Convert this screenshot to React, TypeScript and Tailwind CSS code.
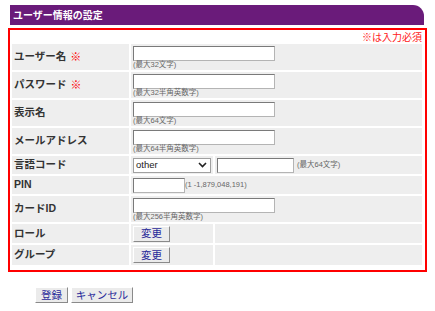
import React from 'react';

const font = { fontFamily: '"Liberation Sans", "Noto Sans CJK JP", sans-serif' };

const TextBox: React.FC<{ w: string }> = ({ w }) => (
  <div
    className={`${w} h-[15px] bg-white border border-[#b4b4b4] border-t-[#7a7a7a] border-l-[#7a7a7a]`}
  />
);

const Note: React.FC<{ children: React.ReactNode }> = ({ children }) => (
  <span className="text-[7.5px] leading-[8px] text-[#666]">{children}</span>
);

const Btn: React.FC<{ label: string; w: string }> = ({ label, w }) => (
  <button
    type="button"
    className={`${w} h-[16px] flex items-center justify-center bg-[#ebebeb] border border-white border-r-[#8a8a8a] border-b-[#8a8a8a] text-[10.5px] leading-none text-[#2a2a9a]`}
  >
    {label}
  </button>
);

const Label: React.FC<{ text: string; req?: boolean }> = ({ text, req }) => (
  <div className="bg-[#eeeeee] flex items-center pl-[2px] text-[10.5px] font-bold text-[#333]">
    {text}
    {req && <span className="ml-[4px] text-[11px] font-black text-[#ff0000]">※</span>}
  </div>
);

const InputCell: React.FC<{ note: string }> = ({ note }) => (
  <div className="col-span-2 bg-[#eeeeee] flex flex-col items-start pl-[2px] pt-[2px]">
    <TextBox w="w-[142px]" />
    <Note>{note}</Note>
  </div>
);

export default function App() {
  return (
    <div className="w-[435px] h-[311px] bg-white pt-[5px]" style={font}>
      <div className="ml-[10px] w-[414px] h-[20px] bg-[#6a1b7a] rounded-tr-[11px] flex items-center pl-[3px] text-[10px] font-bold text-white">
        ユーザー情報の設定
      </div>

      <div className="mt-[3px] ml-[8px] w-[419px] border-2 border-[#ff0000] pl-[2px] pb-[5px]">
        <div className="w-[410px] h-[14px] flex items-center justify-end text-[10px] text-[#ff2020]">
          ※は入力必須
        </div>
        <div className="w-[410px] grid grid-cols-[117px_82px_207px] grid-rows-[26px_26px_26px_26px_18px_18px_26px_19px_20px] gap-[2px]">
          <Label text="ユーザー名" req />
          <InputCell note="(最大32文字)" />

          <Label text="パスワード" req />
          <InputCell note="(最大32半角英数字)" />

          <Label text="表示名" />
          <InputCell note="(最大64文字)" />

          <Label text="メールアドレス" />
          <InputCell note="(最大64半角英数字)" />

          <Label text="言語コード" />
          <div className="bg-[#eeeeee] flex items-center pl-[2px]">
            <div className="w-[78px] h-[15px] bg-white border border-[#a0a0a0] flex items-center justify-between pl-[2px] pr-[3px]">
              <span className="text-[9.5px] leading-none text-[#222]">other</span>
              <svg width="9" height="6" viewBox="0 0 9 6">
                <path d="M1 1 L4.5 4.5 L8 1" fill="none" stroke="#222" strokeWidth="1.6" />
              </svg>
            </div>
          </div>
          <div className="bg-[#eeeeee] flex items-center pl-[2px] gap-[3px]">
            <TextBox w="w-[77px]" />
            <Note>(最大64文字)</Note>
          </div>

          <Label text="PIN" />
          <div className="col-span-2 bg-[#eeeeee] flex items-center pl-[2px]">
            <TextBox w="w-[52px]" />
            <Note>(1 -1,879,048,191)</Note>
          </div>

          <Label text="カードID" />
          <InputCell note="(最大256半角英数字)" />

          <Label text="ロール" />
          <div className="bg-[#eeeeee] flex items-center pl-[2px]">
            <Btn label="変更" w="w-[37px]" />
          </div>
          <div className="bg-[#eeeeee]" />

          <Label text="グループ" />
          <div className="bg-[#eeeeee] flex items-center pl-[2px]">
            <Btn label="変更" w="w-[37px]" />
          </div>
          <div className="bg-[#eeeeee]" />
        </div>
      </div>

      <div className="mt-[15px] ml-[35px] flex gap-[3px]">
        <Btn label="登録" w="w-[33px]" />
        <Btn label="キャンセル" w="w-[62px]" />
      </div>
    </div>
  );
}
